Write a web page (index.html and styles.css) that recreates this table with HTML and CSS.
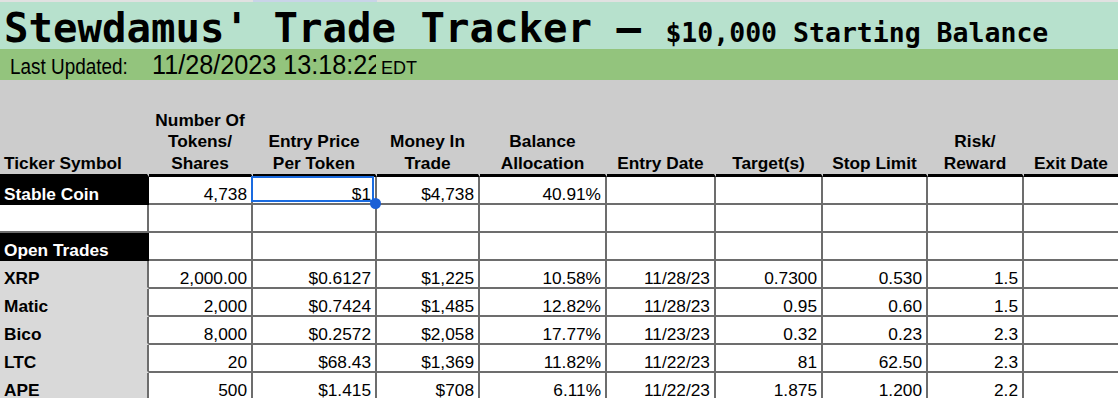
FILE: index.html
```html
<!DOCTYPE html>
<html lang="en">
<head>
<meta charset="utf-8">
<title>Stewdamus' Trade Tracker</title>
<link rel="stylesheet" href="styles.css">
</head>
<body>
<div class="sheet">
  <div class="colheads">
    <span></span><span></span><span class="on"></span><span></span><span></span><span></span><span></span><span></span><span></span><span></span>
  </div>
  <div class="title-row">
    <h1 class="title">Stewdamus' Trade Tracker – <span class="sub">$10,000 Starting Balance</span></h1>
  </div>
  <div class="updated-row">
    <div class="upd-label"><span class="narrow">Last Updated:</span></div>
    <div class="upd-time"><span class="narrow">11/28/2023 13:18:22</span></div>
    <div class="upd-tz">EDT</div>
  </div>
  <div class="grid">
    <div class="c h left">Ticker Symbol</div>
    <div class="c h">Number Of<br>Tokens/<br>Shares</div>
    <div class="c h">Entry Price<br>Per Token</div>
    <div class="c h">Money In<br>Trade</div>
    <div class="c h">Balance<br>Allocation</div>
    <div class="c h">Entry Date</div>
    <div class="c h">Target(s)</div>
    <div class="c h">Stop Limit</div>
    <div class="c h">Risk/<br>Reward</div>
    <div class="c h">Exit Date</div>

    <div class="c lbl dark">Stable Coin</div>
    <div class="c">4,738</div>
    <div class="c sel">$1</div>
    <div class="c">$4,738</div>
    <div class="c">40.91%</div>
    <div class="c"></div><div class="c"></div><div class="c"></div><div class="c"></div><div class="c"></div>

    <div class="c lbl blank"></div>
    <div class="c"></div><div class="c"></div><div class="c"></div><div class="c"></div><div class="c"></div><div class="c"></div><div class="c"></div><div class="c"></div><div class="c"></div>

    <div class="c lbl dark">Open Trades</div>
    <div class="c"></div><div class="c"></div><div class="c"></div><div class="c"></div><div class="c"></div><div class="c"></div><div class="c"></div><div class="c"></div><div class="c"></div>

    <div class="c lbl">XRP</div>
    <div class="c">2,000.00</div><div class="c">$0.6127</div><div class="c">$1,225</div><div class="c">10.58%</div><div class="c">11/28/23</div><div class="c">0.7300</div><div class="c">0.530</div><div class="c">1.5</div><div class="c"></div>

    <div class="c lbl">Matic</div>
    <div class="c">2,000</div><div class="c">$0.7424</div><div class="c">$1,485</div><div class="c">12.82%</div><div class="c">11/28/23</div><div class="c">0.95</div><div class="c">0.60</div><div class="c">1.5</div><div class="c"></div>

    <div class="c lbl">Bico</div>
    <div class="c">8,000</div><div class="c">$0.2572</div><div class="c">$2,058</div><div class="c">17.77%</div><div class="c">11/23/23</div><div class="c">0.32</div><div class="c">0.23</div><div class="c">2.3</div><div class="c"></div>

    <div class="c lbl">LTC</div>
    <div class="c">20</div><div class="c">$68.43</div><div class="c">$1,369</div><div class="c">11.82%</div><div class="c">11/22/23</div><div class="c">81</div><div class="c">62.50</div><div class="c">2.3</div><div class="c"></div>

    <div class="c lbl">APE</div>
    <div class="c">500</div><div class="c">$1.415</div><div class="c">$708</div><div class="c">6.11%</div><div class="c">11/22/23</div><div class="c">1.875</div><div class="c">1.200</div><div class="c">2.2</div><div class="c"></div>
  </div>
</div>
</body>
</html>
```

FILE: styles.css
```css
html, body {
  margin: 0;
  padding: 0;
  background: #ffffff;
}

body {
  width: 1118px;
  height: 398px;
  overflow: hidden;
  font-family: "Liberation Sans", Arial, sans-serif;
  color: #000;
}

.sheet {
  width: 1120px;
}

.colheads {
  display: grid;
  grid-template-columns: 149px 104px 124px 103px 127px 109px 107px 105px 96px 96px;
  height: 2px;
  background: #e1e1e1;
}

.colheads .on {
  background: #c9d4e8;
}

.title-row {
  height: 47px;
  background: #b7e1cd;
  overflow: hidden;
  padding-left: 4px;
  box-sizing: border-box;
  padding-top: 6px;
}

.title {
  margin: 0;
  font-family: "DejaVu Sans Mono", "Liberation Mono", monospace;
  font-weight: bold;
  font-size: 40.7px;
  line-height: 41px;
  white-space: nowrap;
}

.title .sub {
  font-size: 26.5px;
}

.updated-row {
  height: 31px;
  background: #93c47d;
  display: flex;
  align-items: baseline;
  box-sizing: border-box;
  padding-top: 2px;
  overflow: hidden;
}

.narrow {
  display: inline-block;
  transform-origin: 0 100%;
  white-space: nowrap;
}

.upd-label {
  width: 149px;
  box-sizing: border-box;
  padding-left: 10px;
  font-size: 21.5px;
  line-height: 28px;
  white-space: nowrap;
}

.upd-label .narrow {
  transform: scaleX(0.88);
}

.upd-time {
  width: 227px;
  box-sizing: border-box;
  padding-left: 3px;
  font-size: 28px;
  line-height: 28px;
  white-space: nowrap;
  overflow: hidden;
}

.upd-time .narrow {
  transform: scaleX(0.9);
}

.upd-tz {
  padding-left: 5px;
  font-size: 18px;
  line-height: 28px;
}

.grid {
  display: grid;
  grid-template-columns: 149px 104px 124px 103px 127px 109px 107px 105px 96px 96px;
  grid-template-rows: 97px repeat(8, 28px);
}

.c {
  box-sizing: border-box;
  border-right: 2px solid #6d6d6d;
  border-bottom: 2px solid #6d6d6d;
  background: #fff;
  display: flex;
  align-items: flex-end;
  justify-content: flex-end;
  padding: 0 4px;
  font-size: 17.3px;
  line-height: 17px;
  white-space: nowrap;
  overflow: hidden;
}

.h {
  background: #cccccc;
  border-right-color: transparent;
  border-bottom: 3px solid #000;
  font-weight: bold;
  justify-content: center;
  text-align: center;
  line-height: 21.3px;
  padding-bottom: 0;
}

.h.left {
  justify-content: flex-start;
  text-align: left;
}

.lbl {
  justify-content: flex-start;
  font-weight: bold;
  background: #d9d9d9;
  border-bottom-color: #d9d9d9;
}

.lbl.dark {
  background: #000;
  color: #fff;
  border-right-color: #000;
  border-bottom-color: #000;
}

.lbl.blank {
  background: #fff;
  border-bottom-color: #6d6d6d;
}

.sel {
  position: relative;
  overflow: visible;
  z-index: 2;
}

.sel::before {
  content: "";
  position: absolute;
  left: -2px;
  top: -1px;
  right: 1px;
  bottom: 1px;
  border: 2px solid #1a6be0;
}

.sel::after {
  content: "";
  position: absolute;
  left: 117px;
  top: 21px;
  width: 11px;
  height: 11px;
  border-radius: 50%;
  background: #1a5fd6;
}
```
